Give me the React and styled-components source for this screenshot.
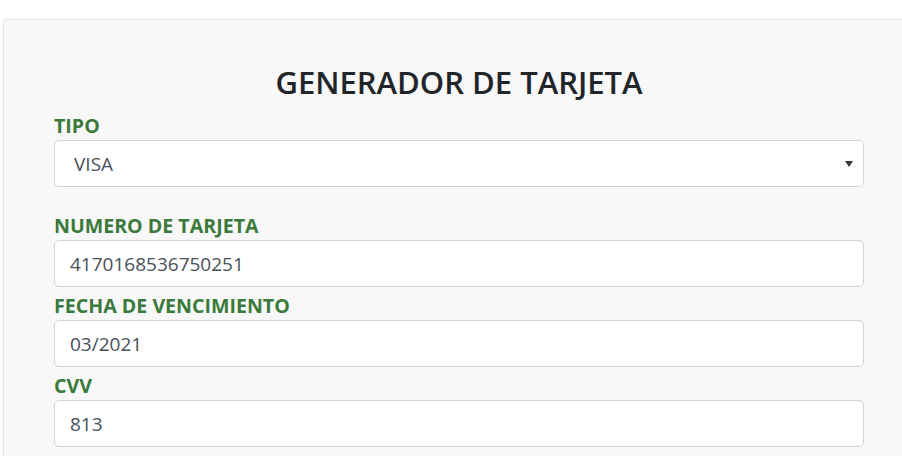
import styled, { createGlobalStyle } from "styled-components";

const GlobalStyle = createGlobalStyle`
    body {
        margin: 0;
        background: #ffffff;
        font-family: "Open Sans", "Liberation Sans", sans-serif;
        overflow: hidden;
    }
`;

const Card = styled.div`
    box-sizing: border-box;
    width: 912px;
    margin: 19px 0 0 3px;
    padding: 42px 50px 20px;
    background: #f8f8f8;
    border: 1px solid #e5e5e5;
    border-radius: 5px;
    box-shadow: 0 -1px 2px rgba(0, 0, 0, 0.05);
`;

const Title = styled.h1`
    margin: 0 0 11px;
    text-align: center;
    font-size: 31px;
    font-weight: 600;
    line-height: 40px;
    color: #212529;
`;

const Field = styled.div`
    display: flex;
    flex-direction: column;
    margin-bottom: ${(p) => (p.$spaced ? "26px" : "6px")};
`;

const Label = styled.label`
    font-size: 19.6px;
    font-weight: 700;
    line-height: 26px;
    color: #3b7a3b;
    margin-bottom: 1px;
`;

const Input = styled.input`
    box-sizing: border-box;
    height: 47px;
    width: 100%;
    padding: 0 15px;
    font-family: inherit;
    font-size: 19px;
    color: #495057;
    background: #ffffff;
    border: 1px solid #ced4da;
    border-radius: 5px;
    outline: none;
`;

const Select = styled.select`
    box-sizing: border-box;
    height: 47px;
    width: 100%;
    padding: 0 19px;
    font-family: inherit;
    font-size: 19px;
    color: #495057;
    background: #ffffff url("data:image/svg+xml;utf8,<svg xmlns='http://www.w3.org/2000/svg' width='8' height='6'><path d='M0 0h8L4 6z' fill='%23343a40'/></svg>") no-repeat right 10px center;
    border: 1px solid #ced4da;
    border-radius: 5px;
    appearance: none;
    outline: none;
`;

const App = () => {
    return (
        <>
            <GlobalStyle />
            <Card>
                <Title>GENERADOR DE TARJETA</Title>

                <Field $spaced>
                    <Label>TIPO</Label>
                    <Select defaultValue="VISA">
                        <option value="VISA">VISA</option>
                        <option value="MASTERCARD">MASTERCARD</option>
                        <option value="AMEX">AMEX</option>
                    </Select>
                </Field>

                <Field>
                    <Label>NUMERO DE TARJETA</Label>
                    <Input defaultValue="4170168536750251" />
                </Field>

                <Field>
                    <Label>FECHA DE VENCIMIENTO</Label>
                    <Input defaultValue="03/2021" />
                </Field>

                <Field>
                    <Label>CVV</Label>
                    <Input defaultValue="813" />
                </Field>
            </Card>
        </>
    );
};

export default App;
